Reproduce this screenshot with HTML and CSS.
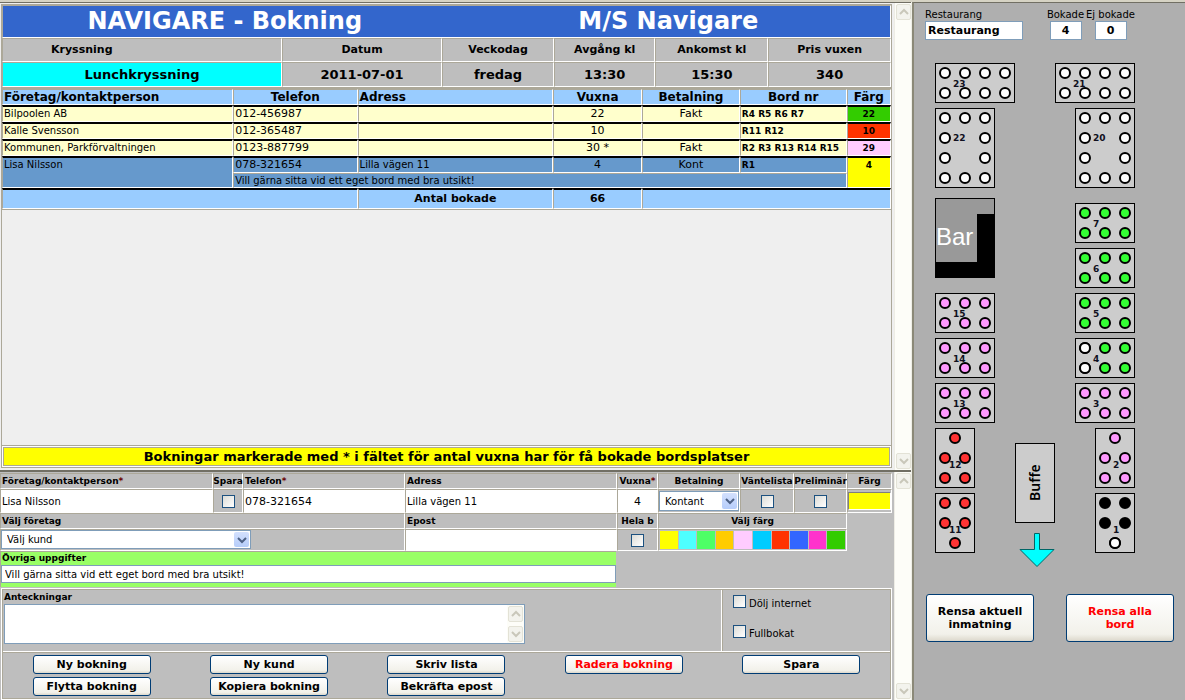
FILE: index.html
```html
<!DOCTYPE html>
<html lang="sv">
<head>
<meta charset="utf-8">
<title>NAVIGARE - Bokning</title>
<link rel="stylesheet" href="styles.css">
</head>
<body>
<svg class="defs" aria-hidden="true">
  <defs>
    <path id="up" d="M1 6 L5 2 L9 6"/>
    <path id="down" d="M1 2 L5 6 L9 2"/>
  </defs>
</svg>
<div class="app">
  <main class="work">
    <section class="frame list-frame">
      <div class="content list">
        <table class="grid cruise">
          <colgroup><col class="c-cruise"><col class="c-date"><col class="c-day"><col class="c-dep"><col class="c-arr"><col></colgroup>
          <thead>
            <tr><th colspan="6" class="banner"><div class="banner-row"><span>NAVIGARE - Bokning</span><span>M/S Navigare</span></div></th></tr>
            <tr class="heads"><th class="first">Kryssning</th><th>Datum</th><th>Veckodag</th><th>Avgång kl</th><th>Ankomst kl</th><th>Pris vuxen</th></tr>
          </thead>
          <tbody>
            <tr class="values"><td class="cyan">Lunchkryssning</td><td>2011-07-01</td><td>fredag</td><td>13:30</td><td>15:30</td><td>340</td></tr>
          </tbody>
        </table>
        <table class="grid bookings">
          <colgroup><col class="b-name"><col class="b-tel"><col class="b-adr"><col class="b-num"><col class="b-pay"><col class="b-tables"><col class="b-color"></colgroup>
          <thead>
            <tr><th class="left">Företag/kontaktperson</th><th>Telefon</th><th class="left">Adress</th><th>Vuxna</th><th>Betalning</th><th>Bord nr</th><th>Färg</th></tr>
          </thead>
          <tbody>
            <tr class="ruled"><td>Bilpoolen AB</td><td class="phone">012-456987</td><td></td><td class="num">22</td><td class="num">Fakt</td><td class="tables">R4 R5 R6 R7</td><td class="tag green">22</td></tr>
            <tr class="ruled"><td>Kalle Svensson</td><td class="phone">012-365487</td><td></td><td class="num">10</td><td class="num"></td><td class="tables">R11 R12</td><td class="tag red">10</td></tr>
            <tr class="ruled"><td>Kommunen, Parkförvaltningen</td><td class="phone">0123-887799</td><td></td><td class="num">30 *</td><td class="num">Fakt</td><td class="tables">R2 R3 R13 R14 R15</td><td class="tag pink">29</td></tr>
            <tr class="ruled selected"><td rowspan="2">Lisa Nilsson</td><td class="phone">078-321654</td><td>Lilla vägen 11</td><td class="num">4</td><td class="num">Kont</td><td class="tables">R1</td><td rowspan="2" class="tag yellow">4</td></tr>
            <tr class="selected note"><td colspan="5">Vill gärna sitta vid ett eget bord med bra utsikt!</td></tr>
          </tbody>
          <tfoot>
            <tr class="ruled"><td colspan="2"></td><td>Antal bokade</td><td>66</td><td colspan="3"></td></tr>
          </tfoot>
        </table>
        <div class="filler"></div>
        <div class="notice"><p>Bokningar markerade med * i fältet för antal vuxna har för få bokade bordsplatser</p></div>
      </div>
      <div class="scrollbar" aria-hidden="true">
        <span class="arrow"><svg viewBox="0 0 10 8"><use href="#up"/></svg></span>
        <span class="arrow"><svg viewBox="0 0 10 8"><use href="#down"/></svg></span>
      </div>
    </section>

    <section class="frame form-frame">
      <form class="content form">
        <div class="fields">
          <label class="cell" for="name">Företag/kontaktperson<i>*</i></label>
          <label class="cell mid" for="save">Spara</label>
          <label class="cell" for="tel">Telefon<i>*</i></label>
          <label class="cell" for="adr">Adress</label>
          <label class="cell mid" for="adults">Vuxna<i>*</i></label>
          <label class="cell mid" for="pay">Betalning</label>
          <label class="cell mid" for="wait">Väntelista</label>
          <label class="cell mid" for="prel">Preliminär</label>
          <label class="cell mid" for="color">Färg</label>

          <div class="cell tall"><input class="text" id="name" type="text" value="Lisa Nilsson"></div>
          <div class="cell tall box"><input id="save" type="checkbox"></div>
          <div class="cell tall"><input class="text phone" id="tel" type="text" value="078-321654"></div>
          <div class="cell tall"><input class="text" id="adr" type="text" value="Lilla vägen 11"></div>
          <div class="cell tall"><input class="text phone centered" id="adults" type="text" value="4"></div>
          <div class="cell tall"><span class="drop"><select id="pay"><option>Kontant</option></select><span class="drop-btn"><svg viewBox="0 0 10 8"><use href="#down"/></svg></span></span></div>
          <div class="cell tall box"><input id="wait" type="checkbox"></div>
          <div class="cell tall box"><input id="prel" type="checkbox"></div>
          <div class="cell tall"><input class="swatch-field" id="color" type="text" value=""></div>

          <label class="cell span3" for="customer">Välj företag</label>
          <label class="cell" for="mail">Epost</label>
          <label class="cell mid" for="whole">Hela b</label>
          <div class="cell span3 mid">Välj färg</div>
          <div class="blank"></div>

          <div class="cell span3"><span class="drop wide"><select id="customer"><option>Välj kund</option></select><span class="drop-btn"><svg viewBox="0 0 10 8"><use href="#down"/></svg></span></span></div>
          <div class="cell"><input class="text" id="mail" type="text" value=""></div>
          <div class="cell box"><input id="whole" type="checkbox"></div>
          <div class="cell span3 palette">
            <button type="button" class="p-yellow" aria-label="Gul"></button><button type="button" class="p-aqua" aria-label="Turkos"></button><button type="button" class="p-mint" aria-label="Mint"></button><button type="button" class="p-amber" aria-label="Orange"></button><button type="button" class="p-pink" aria-label="Rosa"></button><button type="button" class="p-sky" aria-label="Ljusblå"></button><button type="button" class="p-red" aria-label="Röd"></button><button type="button" class="p-blue" aria-label="Blå"></button><button type="button" class="p-magenta" aria-label="Cerise"></button><button type="button" class="p-green" aria-label="Grön"></button>
          </div>
          <div class="blank"></div>

          <div class="other"><label for="other">Övriga uppgifter</label><input id="other" type="text" value="Vill gärna sitta vid ett eget bord med bra utsikt!"></div>
        </div>

        <div class="lower">
          <div class="notes-row">
            <div class="notes">
              <label for="notes">Anteckningar</label>
              <div class="notes-area">
                <textarea id="notes"></textarea>
                <span class="mini-bar" aria-hidden="true"><span class="arrow"><svg viewBox="0 0 10 8"><use href="#up"/></svg></span><span class="arrow"><svg viewBox="0 0 10 8"><use href="#down"/></svg></span></span>
              </div>
            </div>
            <div class="options">
              <label><input type="checkbox"><span>Dölj internet</span></label>
              <label><input type="checkbox"><span>Fullbokat</span></label>
            </div>
          </div>
          <div class="actions">
            <button type="button" class="btn">Ny bokning</button>
            <button type="button" class="btn">Ny kund</button>
            <button type="button" class="btn">Skriv lista</button>
            <button type="button" class="btn danger">Radera bokning</button>
            <button type="button" class="btn">Spara</button>
            <button type="button" class="btn">Flytta bokning</button>
            <button type="button" class="btn">Kopiera bokning</button>
            <button type="button" class="btn">Bekräfta epost</button>
          </div>
        </div>
      </form>
      <div class="scrollbar" aria-hidden="true">
        <span class="arrow"><svg viewBox="0 0 10 8"><use href="#up"/></svg></span>
        <span class="arrow"><svg viewBox="0 0 10 8"><use href="#down"/></svg></span>
      </div>
    </section>
  </main>

  <aside class="room">
    <div class="room-head">
      <div class="stat room-name"><label for="room">Restaurang</label><input id="room" type="text" value="Restaurang"></div>
      <div class="stat"><label for="booked">Bokade</label><input id="booked" type="text" value="4"></div>
      <div class="stat"><label for="free">Ej bokade</label><input id="free" type="text" value="0"></div>
    </div>
    <svg class="plan" viewBox="0 0 260 520" role="img" aria-label="Bordsplan">
      <defs>
        <g id="t8"><rect class="top" x=".5" y=".5" width="79" height="39"/><circle cx="10" cy="10" r="5"/><circle cx="30" cy="10" r="5"/><circle cx="50" cy="10" r="5"/><circle cx="70" cy="10" r="5"/><circle cx="10" cy="30" r="5"/><circle cx="30" cy="30" r="5"/><circle cx="50" cy="30" r="5"/><circle cx="70" cy="30" r="5"/></g>
        <g id="t10"><rect class="top" x=".5" y=".5" width="59" height="79"/><circle cx="10" cy="10" r="5"/><circle cx="30" cy="10" r="5"/><circle cx="50" cy="10" r="5"/><circle cx="10" cy="30" r="5"/><circle cx="50" cy="30" r="5"/><circle cx="10" cy="50" r="5"/><circle cx="50" cy="50" r="5"/><circle cx="10" cy="70" r="5"/><circle cx="30" cy="70" r="5"/><circle cx="50" cy="70" r="5"/></g>
        <g id="t6"><rect class="top" x=".5" y=".5" width="59" height="39"/><circle cx="10" cy="10" r="5"/><circle cx="30" cy="10" r="5"/><circle cx="50" cy="10" r="5"/><circle cx="10" cy="30" r="5"/><circle cx="30" cy="30" r="5"/><circle cx="50" cy="30" r="5"/></g>
        <g id="t5up"><rect class="top" x=".5" y=".5" width="39" height="59"/><circle cx="20" cy="10" r="5"/><circle cx="10" cy="30" r="5"/><circle cx="30" cy="30" r="5"/><circle cx="10" cy="50" r="5"/><circle cx="30" cy="50" r="5"/></g>
        <g id="t5down"><rect class="top" x=".5" y=".5" width="39" height="59"/><circle cx="10" cy="10" r="5"/><circle cx="30" cy="10" r="5"/><circle cx="10" cy="30" r="5"/><circle cx="30" cy="30" r="5"/><circle cx="20" cy="50" r="5"/></g>
      </defs>
      <g class="seats">
        <use href="#t8" x="10" y="10" class="s-free"/>
        <use href="#t8" x="130" y="10" class="s-free"/>
        <use href="#t10" x="10" y="55" class="s-free"/>
        <use href="#t10" x="150" y="55" class="s-free"/>
        <use href="#t6" x="150" y="150" class="s-green"/>
        <use href="#t6" x="150" y="195" class="s-green"/>
        <use href="#t6" x="150" y="240" class="s-green"/>
        <use href="#t6" x="150" y="285" class="s-green"/>
        <circle class="s-free" cx="160" cy="295" r="5"/><circle class="s-free" cx="160" cy="315" r="5"/>
        <use href="#t6" x="150" y="330" class="s-pink"/>
        <use href="#t6" x="10" y="240" class="s-pink"/>
        <use href="#t6" x="10" y="285" class="s-pink"/>
        <use href="#t6" x="10" y="330" class="s-pink"/>
        <use href="#t5up" x="10" y="375" class="s-red"/>
        <use href="#t5down" x="10" y="440" class="s-red"/>
        <use href="#t5up" x="170" y="375" class="s-pink"/>
        <use href="#t5down" x="170" y="440" class="s-black"/>
        <circle class="s-free" cx="190" cy="490" r="5"/>
      </g>
      <g class="numbers">
        <text x="28" y="34">23</text><text x="148" y="34">21</text>
        <text x="28" y="88">22</text><text x="168" y="88">20</text>
        <text x="168" y="174">7</text><text x="168" y="219">6</text><text x="168" y="264">5</text><text x="168" y="309">4</text><text x="168" y="354">3</text>
        <text x="28" y="264">15</text><text x="28" y="309">14</text><text x="28" y="354">13</text>
        <text x="24" y="415">12</text><text x="24" y="480">11</text>
        <text x="188" y="415">2</text><text x="188" y="480">1</text>
      </g>
      <rect class="bar-floor" x="10.5" y="145.5" width="59" height="79"/>
      <path d="M52 161 H70 V225 H10 V209 H52 Z"/>
      <text class="bar-name" x="11" y="192">Bar</text>
      <rect class="top" x="90.5" y="390.5" width="39" height="79"/>
      <text class="buffet" transform="translate(115 448) rotate(-90)">Buffe</text>
      <path class="entry" d="M109.500 480.500 H114.500 V496.500 H129 L112 513.500 L95 496.500 H109.500 Z"/>
    </svg>
    <div class="room-actions">
      <button type="button" class="btn big">Rensa aktuell inmatning</button>
      <button type="button" class="btn big danger">Rensa alla<br>bord</button>
    </div>
  </aside>
</div>
</body>
</html>
```
FILE: styles.css
```css
* { box-sizing: border-box; }

body {
  margin: 0;
  font-family: "DejaVu Sans", Verdana, sans-serif;
  font-size: 10px;
  color: #000;
  background: #bebebe;
}

input, select, textarea, button { font: inherit; color: inherit; margin: 0; border-radius: 0; }
.defs { position: absolute; width: 0; height: 0; }

.app { display: flex; min-height: 100vh; border-top: 2px solid #d6d3c4; }
.work { flex: 1; min-width: 0; display: flex; flex-direction: column; border-top: 1px solid #716f64; }
.frame { display: flex; }
.list-frame { flex: 1; background: #efefef; }
.form-frame { border-top: 2px solid #716f64; background: #bebebe; }
.content { flex: 1; min-width: 0; margin-right: 2px; }
.list { display: flex; flex-direction: column; padding: 1px 0 0 1px; }
.form { padding-top: 1px; }

/* Scrollbars */
.scrollbar { width: 18px; display: flex; flex-direction: column; justify-content: space-between; background: #fdfdf8; border-left: 1px solid #eeede5; padding: 1px; }
.arrow { display: grid; place-items: center; height: 16px; background: #f3f3ed; border: 1px solid #e3e2d6; border-radius: 2px; }
.arrow svg { width: 10px; height: 8px; fill: none; stroke: #c9c7ba; stroke-width: 2; }

/* Bevelled tables */
.grid { width: 100%; table-layout: fixed; border-collapse: separate; border-spacing: 0; border: 1px solid #aca899; }
.grid th, .grid td { border: 1px solid; border-color: #aca899 #fff #fff #aca899; overflow: hidden; white-space: nowrap; padding: 0 1px; }
.cruise { background: #bebebe; text-align: center; }
.c-cruise { width: 31.5%; } .c-date { width: 18%; } .c-day { width: 12.6%; } .c-dep { width: 11.4%; } .c-arr { width: 12.7%; }
.cruise .banner { background: #3366cc; color: #fff; padding: 0; }
.banner-row { display: grid; grid-template-columns: 1fr 1fr; font-size: 24px; line-height: 31px; }
.heads th { font-size: 11px; line-height: 22px; }
.cruise .first { text-align: left; padding-left: 48px; }
.values td { font-size: 13px; line-height: 23px; font-weight: bold; }
.values .cyan { background: #00ffff; }

.b-name { width: 26%; } .b-tel { width: 14%; } .b-adr { width: 22%; } .b-num { width: 10%; } .b-pay { width: 11%; } .b-tables { width: 12%; } .b-color { width: 5%; }
.bookings th { background: #99ccff; font-size: 12px; line-height: 14px; }
.bookings .left { text-align: left; }
.bookings td { background: #ffffcc; line-height: 14px; vertical-align: top; }
.bookings .ruled td { border-top: 2px solid #000; }
.bookings .num { text-align: center; font-size: 11px; }
.phone { font-size: 11px; }
.bookings .tables { font-size: 9px; font-weight: bold; }
.bookings .tag { text-align: center; font-size: 9px; font-weight: bold; }
.bookings .green { background: #33cc00; }
.bookings .red { background: #ff3300; }
.bookings .pink { background: #ffccff; }
.bookings .selected td { background: #6699cc; }
.bookings .selected .yellow { background: #ffff00; }
.bookings .note td { line-height: 13px; }
.bookings tfoot td { background: #99ccff; font-size: 11px; font-weight: bold; text-align: center; height: 21px; line-height: 18px; }

.filler { flex: 1; border: solid #aca899; border-width: 0 1px; }
.notice { border: 1px solid #aca899; padding: 1px; background: #fff; margin-bottom: 2px; }
.notice p { margin: 0; background: #ffff00; border: 1px solid #aca899; text-align: center; font-size: 13px; font-weight: bold; line-height: 17px; }

/* Booking form */
.fields {
  display: grid;
  grid-template-columns: minmax(0, 213fr) minmax(0, 30fr) minmax(0, 162fr) minmax(0, 212fr) minmax(0, 41fr) minmax(0, 82fr) minmax(0, 54fr) minmax(0, 53fr) minmax(0, 45fr);
}
.cell { border: 1px solid; border-color: #aca899 #fff #fff #aca899; min-width: 0; height: 22px; white-space: nowrap; }
.cell.tall { height: 24px; }
label.cell, .cell.mid { height: 16px; font-size: 9px; font-weight: bold; line-height: 14px; padding-left: 1px; }
.cell.mid { display: flex; justify-content: center; padding: 0; }
.cell i { font-style: normal; color: #600; }
.span3 { grid-column: span 3; }
.text { display: block; width: 100%; height: 100%; border: 0; padding: 0 1px; background: #fff; }
.text.phone { font-size: 11px; }
.centered { text-align: center; }
.box { display: grid; place-items: center; }
input[type="checkbox"] { appearance: none; width: 13px; height: 13px; border: 1px solid #1c5180; background: linear-gradient(135deg, #dcdcd7, #fff); }
.drop { display: flex; height: 20px; border: 1px solid #7f9db9; background: #fff; padding: 1px; }
.tall .drop { margin-top: 1px; }
.drop.wide { width: 250px; max-width: 100%; height: 19px; }
.drop select { appearance: none; flex: 1; min-width: 0; border: 0; background: #fff; padding: 0 4px; }
.drop-btn { width: 15px; display: grid; place-items: center; background: linear-gradient(#d3e0fd, #b6cdfa); border-radius: 2px; }
.drop-btn svg { width: 10px; height: 8px; fill: none; stroke: #4d6185; stroke-width: 2; }
.swatch-field { display: block; width: 100%; height: 18px; margin-top: 2px; border: 1px solid; border-color: #808080 #fff #fff #808080; background: #ffff00; }
.palette { display: grid; grid-template-columns: repeat(10, 1fr); gap: 1px; padding: 1px; }
.palette button { border: 0; padding: 0; }
.p-yellow { background: #ffff00; } .p-aqua { background: #4dffff; } .p-mint { background: #4dff66; } .p-amber { background: #ffcc00; } .p-pink { background: #ffccff; }
.p-sky { background: #00ccff; } .p-red { background: #ff3300; } .p-blue { background: #3366ff; } .p-magenta { background: #ff33cc; } .p-green { background: #33cc00; }
.other { grid-column: span 4; display: flex; flex-direction: column; background: #99ff66; border: 1px solid #aca899; border-width: 1px 0 0 1px; margin-right: 1px; padding-bottom: 4px; }
.other label { font-size: 9px; font-weight: bold; line-height: 13px; padding-left: 1px; }
.other input { height: 18px; border: 1px solid #7f9db9; padding: 0 3px; background: #fff; }

.lower { border: 1px solid #fff; outline: 1px solid #aca899; outline-offset: -2px; margin: 1px 0 0 1px; padding: 1px; }
.notes-row { display: flex; border-bottom: 1px solid #fff; }
.notes { flex: 1; padding: 1px 0 7px 1px; border-right: 1px solid #fff; }
.notes label { display: block; font-size: 9px; font-weight: bold; line-height: 13px; }
.notes-area { display: flex; width: 521px; max-width: 100%; height: 40px; border: 1px solid #7f9db9; background: #fff; }
.notes-area textarea { flex: 1; min-width: 0; border: 0; resize: none; padding: 2px; outline: 0; }
.mini-bar { width: 17px; display: flex; flex-direction: column; justify-content: space-between; padding: 1px; background: #fdfdf8; }
.options { width: 168px; display: flex; flex-direction: column; gap: 17px; padding: 5px 0 0 10px; border-left: 1px solid #aca899; }
.options label { display: flex; gap: 3px; align-items: flex-start; }
.options label span { padding-top: 4px; line-height: 9px; }
.actions { display: grid; grid-template-columns: repeat(5, 1fr); gap: 3px 0; justify-items: center; padding: 2px 0 2px; border-top: 1px solid #aca899; }

.btn { width: 118px; height: 19px; padding: 0; border: 1px solid #003c74; border-radius: 3px; background: linear-gradient(#fff, #f2f1ea 85%, #dcd8cc); font-size: 11px; font-weight: bold; line-height: 13px; white-space: nowrap; }
.danger { color: #ff0000; }
.big { width: 108px; height: 48px; white-space: normal; }

/* Restaurant plan */
.room { flex: 0 0 273px; background: #afafaf; border-top: 1px solid #716f64; border-left: 2px solid #8b8978; box-shadow: -1px 0 #efefe6; padding: 6px 10px 0 11px; }
.room-head { display: flex; height: 44px; }
.stat { display: flex; flex-direction: column; align-items: center; width: 45px; white-space: nowrap; }
.stat label { font-size: 10px; line-height: 12px; }
.stat input { width: 32px; height: 19px; border: 1px solid #7f9db9; padding: 0 2px; background: #fff; font-size: 11px; font-weight: bold; text-align: center; }
.room-name { width: 118px; align-items: flex-start; }
.room-name input { width: 98px; text-align: left; }
.plan { display: block; width: 260px; height: 520px; margin-right: -10px; }
.top { fill: #cccccc; stroke: #000; stroke-width: 1; }
.plan circle { stroke: #000; stroke-width: 2; }
.s-free { fill: #fff; } .s-green { fill: #33ff33; } .s-pink { fill: #ff99ff; } .s-red { fill: #ff3333; } .s-black { fill: #000; }
.numbers { font-size: 9px; font-weight: bold; fill: #101020; }
.bar-floor { fill: #999; stroke: #000; }
.bar-name { font-family: "Liberation Sans", Arial, sans-serif; font-size: 24px; fill: #fff; }
.buffet { font-family: "Noto Sans", sans-serif; font-size: 14px; font-weight: 600; }
.entry { fill: #00ffff; stroke: #066; stroke-width: 1; }
.room-actions { display: flex; gap: 32px; padding: 21px 0 0 1px; }
.room-actions .btn { flex: 0 0 108px; }
```
